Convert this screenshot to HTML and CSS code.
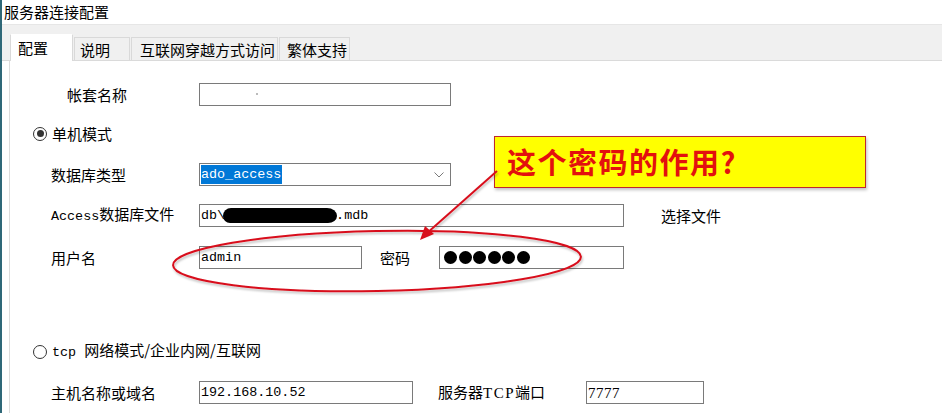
FILE: index.html
```html
<!DOCTYPE html>
<html lang="zh">
<head>
<meta charset="utf-8">
<title>服务器连接配置</title>
<link rel="stylesheet" href="styles.css">
</head>
<body>
<div class="window">
  <div class="titlebar">服务器连接配置</div>
  <div class="tabstrip">
    <div class="tab active">配置</div>
    <div class="tab t2">说明</div>
    <div class="tab t3">互联网穿越方式访问</div>
    <div class="tab t4">繁体支持</div>
  </div>
  <div class="panel">
    <div class="row r1">
      <span class="label indent">帐套名称</span>
      <span class="field w251"><span class="speck"></span></span>
    </div>
    <div class="row r2">
      <span class="radio checked"></span><span class="radio-text">单机模式</span>
    </div>
    <div class="row r3">
      <span class="label">数据库类型</span>
      <span class="field select w251"><span class="sel mono">ado_access</span>
        <svg class="chev" width="10" height="6" viewBox="0 0 10 6"><polyline points="0.5,0.5 5,5 9.5,0.5" fill="none" stroke="#7a7a7a" stroke-width="1"/></svg>
      </span>
    </div>
    <div class="row r4">
      <span class="label"><span class="mono">Access</span>数据库文件</span>
      <span class="field w424"><span class="mono">db\</span><span class="blob"></span><span class="mono">.mdb</span></span>
      <span class="plain choose">选择文件</span>
    </div>
    <div class="row r5">
      <span class="label">用户名</span>
      <span class="field w162"><span class="mono">admin</span></span>
      <span class="plain pw-label">密码</span>
      <span class="field w184 dots"><i></i><i></i><i></i><i></i><i></i><i></i></span>
    </div>
    <div class="row r6">
      <span class="radio"></span><span class="radio-text"><span class="mono">tcp </span>网络模式/企业内网/互联网</span>
    </div>
    <div class="row r7">
      <span class="label">主机名称或域名</span>
      <span class="field w213"><span class="mono">192.168.10.52</span></span>
      <span class="plain port-label">服务器<span class="serif">TCP</span>端口</span>
      <span class="field w117"><span class="serif num">7777</span></span>
    </div>
  </div>
</div>

<div class="callout">这个密码的作用?</div>
<svg class="overlay" width="942" height="413" viewBox="0 0 942 413">
  <defs>
    <filter id="sh" x="-10%" y="-10%" width="120%" height="130%">
      <feDropShadow dx="1" dy="2" stdDeviation="1.2" flood-color="#000" flood-opacity="0.25"/>
    </filter>
  </defs>
  <g filter="url(#sh)" stroke="#d8101c" fill="none" stroke-width="2">
    <ellipse cx="377" cy="261" rx="204" ry="30" transform="rotate(-1.2 377 261)"/>
    <line x1="497" y1="171" x2="426" y2="234"/>
  </g>
  <polygon points="420,240 425,226 434,234" fill="#d8101c"/>
</svg>
</body>
</html>
```

FILE: styles.css
```css
html, body {
  margin: 0;
  padding: 0;
}
body {
  width: 942px;
  height: 413px;
  overflow: hidden;
  background: #ffffff;
  position: relative;
  font-family: "Noto Sans CJK SC", "Noto Sans", sans-serif;
  font-size: 15px;
  color: #000;
}
.window {
  border-left: 2px solid #2f6878;
  height: 413px;
  box-sizing: border-box;
}
.titlebar {
  height: 24px;
  line-height: 24px;
  padding-left: 2px;
  font-size: 15px;
  background: #fff;
}
.tabstrip {
  height: 35px;
  background: #f0f0f0;
  border-top: 1px solid #e6e6e6;
  border-bottom: 1px solid #dadada;
  display: flex;
  align-items: flex-end;
  padding-left: 8px;
  position: relative;
}
.tab {
  height: 23px;
  line-height: 23px;
  border: 1px solid #d9d9d9;
  border-bottom: none;
  background: #f0f0f0;
  font-size: 15px;
  box-sizing: border-box;
  white-space: nowrap;
}
.tab.active {
  background: #fff;
  width: 63px;
  height: 27px;
  line-height: 25px;
  padding-left: 7px;
  margin-bottom: -1px;
  border-top-color: #fff;
  position: relative;
  z-index: 1;
}
.tab.t2 {
  width: 56px;
  padding-left: 5px;
  margin-left: 1px;
}
.tab.t3 {
  width: 147px;
  padding-left: 8px;
  margin-left: 1px;
}
.tab.t4 {
  width: 71px;
  padding-left: 7px;
  margin-left: 1px;
}
.panel {
  margin-left: 7px;
  border-left: 1px solid #dcdcdc;
  padding-left: 41px;
  display: flex;
  flex-direction: column;
  height: 353px;
}
.row {
  display: flex;
  align-items: center;
  height: 23px;
  line-height: 22px;
}
.r1 { margin-top: 22px; }
.r2 { margin-top: 16px; margin-left: -18px; }
.r3 { margin-top: 18px; }
.r4 { margin-top: 18px; }
.r5 { margin-top: 19px; }
.r6 { margin-top: 71px; margin-left: -18px; }
.r7 { margin-top: 18px; }
.label {
  width: 148px;
  flex: none;
  white-space: nowrap;
}
.label.indent {
  padding-left: 16px;
  width: 132px;
}
.mono {
  font-family: "Liberation Mono", monospace;
  font-size: 13.4px;
}
.serif {
  font-family: "Liberation Serif", serif;
}
.num {
  font-size: 15px;
  letter-spacing: 0.5px;
}
.port-label .serif {
  letter-spacing: 1.5px;
  font-size: 15px;
}
.field {
  height: 23px;
  box-sizing: border-box;
  border: 1px solid #7a7a7a;
  background: #fff;
  display: flex;
  align-items: center;
  padding-left: 1px;
  flex: none;
  position: relative;
}
.w251 { width: 252px; }
.w424 { width: 425px; }
.w162 { width: 163px; }
.w184 { width: 185px; }
.w213 { width: 214px; }
.w117 { width: 118px; }
.speck {
  position: absolute;
  left: 56px;
  top: 9px;
  width: 2px;
  height: 2px;
  background: #bbb;
}
.select .sel {
  background: #0078d7;
  color: #fff;
  line-height: 19px;
  padding: 0 1px 0 0;
}
.chev {
  position: absolute;
  right: 6px;
  top: 8px;
}
.blob {
  display: inline-block;
  width: 114px;
  height: 15px;
  background: #000;
  border-radius: 8px 10px 9px 7px / 8px 8px 7px 7px;
  margin: 0 -1px 0 -2px;
}
.plain {
  white-space: nowrap;
  flex: none;
}
.choose { margin-left: 37px; }
.pw-label { margin-left: 18px; width: 59px; }
.port-label { margin-left: 25px; width: 148px; }
.dots {
  padding-left: 4px;
}
.dots i {
  display: inline-block;
  width: 13px;
  height: 13px;
  border-radius: 50%;
  background: #000;
  margin-right: 1.6px;
}
.radio {
  width: 14px;
  height: 14px;
  border: 1px solid #333;
  border-radius: 50%;
  box-sizing: border-box;
  background: #fff;
  position: relative;
  flex: none;
  margin-right: 5px;
}
.radio.checked::after {
  content: "";
  position: absolute;
  left: 2.5px;
  top: 2.5px;
  width: 7px;
  height: 7px;
  border-radius: 50%;
  background: #333;
}
.callout {
  position: absolute;
  left: 494px;
  top: 136px;
  width: 372px;
  height: 52px;
  box-sizing: border-box;
  background: #ffff00;
  border: 1px solid #c0272d;
  box-shadow: 1px 2px 3px rgba(0,0,0,0.25);
  color: #e3100e;
  font-weight: bold;
  font-size: 29px;
  line-height: 48px;
  padding-left: 12px;
  letter-spacing: 1.5px;
}
.overlay {
  position: absolute;
  left: 0;
  top: 0;
  pointer-events: none;
}
```
